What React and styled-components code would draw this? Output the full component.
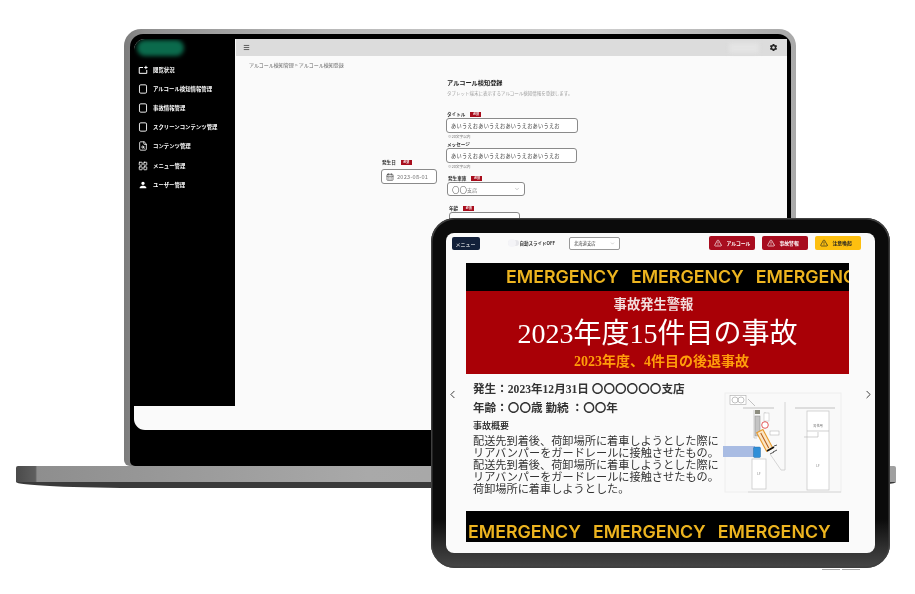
import React from "react";
import styled, { createGlobalStyle } from "styled-components";
import { FileSearch, LayoutGrid, Menu, CalendarDays, ChevronDown, ChevronLeft, ChevronRight, TriangleAlert } from "lucide-react";
import { MdSettings, MdPerson } from "react-icons/md";

const Global = createGlobalStyle`
  html, body { margin: 0; padding: 0; background: #fff; }
  body { font-family: "Noto Sans CJK JP", "Noto Sans", sans-serif; overflow: hidden; }
`;

const Canvas = styled.div`
  position: relative;
  width: 915px;
  height: 594px;
  overflow: hidden;
  background: #fff;
  filter: blur(0.45px);
`;

/* ---------- laptop ---------- */
const Laptop = styled.div`
  position: absolute;
  left: 16px;
  top: 29px;
  width: 880px;
  display: flex;
  flex-direction: column;
  align-items: flex-start;
`;
const Lid = styled.div`
  margin-left: 108px;
  width: 672px;
  height: 437px;
  box-sizing: border-box;
  padding: 5px 5px 0 6px;
  border-radius: 17px 17px 0 6px;
  background: linear-gradient(90deg, #7c7c7c 0, #8f8f8f 3%, #b9b9b9 30%, #cfcfcf 70%, #a9a9a9 100%);
`;
const Bezel = styled.div`
  height: 100%;
  box-sizing: border-box;
  padding: 5px 4px 35px 4px;
  background: #000;
  border-radius: 13px 13px 0 5px;
`;
const Screen = styled.div`
  display: flex;
  height: 391px;
  background: #fafafa;
  border-radius: 11px 0 0 11px;
  overflow: hidden;
`;
const Sidebar = styled.nav`
  width: 101px;
  height: 368px;
  flex: none;
  background: #000;
  margin-right: 1px;
  margin-top: -1px;
  box-sizing: border-box;
  padding: 2px 0 0 3px;
`;
const Logo = styled.div`
  width: 47px;
  height: 16px;
  border-radius: 9px;
  background: #0b6a4c;
  filter: blur(2px);
  margin-bottom: 4px;
`;
const NavItem = styled.div`
  display: flex;
  align-items: center;
  height: 19.2px;
  padding-left: 1px;
  color: #fff;
  font-size: 5.4px;
  font-weight: 700;
  white-space: nowrap;
  svg { flex: none; width: 10px; height: 10px; margin-right: 5px; }
`;
const Main = styled.main`
  flex: 1;
  display: flex;
  flex-direction: column;
  min-width: 0;
`;
const TopBar = styled.header`
  height: 17px;
  flex: none;
  background: #dcdcdc;
  display: flex;
  align-items: center;
  padding: 0 9px 0 7px;
  color: #333;
`;
const AccountBlur = styled.span`
  margin-left: auto;
  margin-right: 10px;
  width: 30px;
  height: 10px;
  background: #e4e4e4;
  filter: blur(2px);
`;
const Crumb = styled.div`
  padding: 5px 0 0 13px;
  height: 10px;
  line-height: 8px;
  font-size: 5px;
  color: #666;
`;
const FormRow = styled.div`
  display: flex;
  padding-left: 145px;
  gap: 9px;
`;
const DateCol = styled.div`
  width: 56px;
  margin-top: 87px;
  flex: none;
`;
const DateGap = styled.div`
  height: 3px;
`;
const FormCol = styled.div`
  width: 180px;
  padding-top: 7px;
`;
const Heading = styled.div`
  font-size: 6.2px;
  line-height: 10px;
  font-weight: 700;
  color: #222;
  padding-left: 1px;
`;
const Sub = styled.div`
  font-size: 4.5px;
  line-height: 8px;
  margin: 1px 0 13px;
  padding-left: 1px;
  color: #a0a0a0;
  white-space: nowrap;
`;
const Label = styled.div`
  display: flex;
  align-items: center;
  gap: 5px;
  height: 8px;
  font-size: 4.6px;
  font-weight: 700;
  color: #333;
  padding-left: ${p => p.$indent ?? 1}px;
  margin-top: ${p => p.$top || 0}px;
`;
const Required = styled.span`
  background: #a80d1c;
  color: #fff;
  font-size: 3px;
  line-height: 5px;
  width: 11px;
  text-align: center;
`;
const Input = styled.div`
  box-sizing: border-box;
  width: ${p => p.$w}px;
  height: ${p => p.$h || 15}px;
  margin-left: ${p => p.$indent || 0}px;
  border: 1px solid #8a8a8a;
  border-radius: 3px;
  background: #fff;
  display: flex;
  align-items: center;
  justify-content: ${p => (p.$between ? "space-between" : "flex-start")};
  gap: 3px;
  padding: 0 4px;
  font-size: 5.2px;
  letter-spacing: 0.25px;
  color: #444;
  white-space: nowrap;
`;
const DateText = styled.span`
  color: #777;
  font-size: 5.6px;
`;
const Circles = styled.span`
  font-size: 7.5px;
  letter-spacing: 0;
  color: #666;
`;
const BranchName = styled.span`
  display: flex;
  align-items: center;
  color: #777;
  font-size: 5px;
`;
const Note = styled.div`
  font-size: 3.7px;
  line-height: 7px;
  height: ${p => p.$h}px;
  padding-left: 2px;
  color: #777;
`;

/* laptop base */
const Base = styled.div`
  width: 880px;
  height: 22px;
  border-radius: 2px 2px 130px 130px / 2px 2px 6px 6px;
  background:
    linear-gradient(90deg, #4a4a4a 0, #5e5e5e 2.2%, #8e8e8e 2.4%, #a9a9a9 40%, #a0a0a0 100%) top / 100% 16px no-repeat,
    #3a3a3a;
`;

/* ---------- tablet ---------- */
const Tablet = styled.div`
  position: absolute;
  left: 431px;
  top: 218px;
  width: 459px;
  height: 350px;
  box-sizing: border-box;
  padding: 15px 15px 15px 14.5px;
  border-radius: 24px;
  background: linear-gradient(180deg, #0b0b0b 0, #0b0b0b 86%, #333 95%, #474747 100%);
  box-shadow: inset 0 0 0 1.5px #3f3f3f;
`;
const SideButtons = styled.div`
  position: absolute;
  right: 30px;
  bottom: -2px;
  display: flex;
  gap: 2px;
`;
const SideButton = styled.span`
  width: 18px;
  height: 1.5px;
  background: #aaa;
`;
const TabScreen = styled.div`
  position: relative;
  height: 320px;
  background: #fafafa;
  border-radius: 8px;
  overflow: hidden;
  box-sizing: border-box;
  padding: 3px 0 0;
`;
const ToolBar = styled.div`
  display: flex;
  align-items: center;
  height: 14px;
  padding: 0 14px 0 6px;
  margin-bottom: 12.5px;
`;
const MenuButton = styled.div`
  width: 28px;
  height: 13px;
  border-radius: 2px;
  background: #12203a;
  color: #fff;
  display: flex;
  align-items: center;
  justify-content: center;
  font-size: 5px;
  line-height: 1;
  margin-right: 28px;
`;
const Toggle = styled.span`
  position: relative;
  width: 11px;
  height: 6px;
  border-radius: 4px;
  background: #e6e6ea;
  margin-right: 1px;
  &::after {
    content: "";
    position: absolute;
    left: 0;
    top: -1px;
    width: 8px;
    height: 8px;
    border-radius: 50%;
    background: #f4f4f7;
  }
`;
const ToggleLabel = styled.span`
  width: 49.5px;
  font-size: 4.5px;
  line-height: 1;
  font-weight: 700;
  color: #333;
  white-space: nowrap;
`;
const Select = styled.div`
  box-sizing: border-box;
  width: 51px;
  height: 13px;
  border: 1px solid #999;
  border-radius: 2px;
  background: #fff;
  display: flex;
  align-items: center;
  justify-content: space-between;
  padding: 0 4px;
  font-size: 4.3px;
  line-height: 1;
  color: #444;
`;
const Alerts = styled.div`
  margin-left: auto;
  display: flex;
  gap: 6.5px;
`;
const AlertBtn = styled.div`
  box-sizing: border-box;
  width: 46.5px;
  height: 14px;
  border-radius: 2px;
  display: flex;
  align-items: center;
  padding-left: 5px;
  gap: 5px;
  font-size: 4.8px;
  line-height: 1;
  font-weight: 700;
  background: ${p => (p.$yellow ? "#fdbf0f" : "#a80d1f")};
  color: ${p => (p.$yellow ? "#222" : "#fff")};
  svg { width: 8px; height: 8px; flex: none; }
`;
const Slide = styled.div`
  margin-left: 20.5px;
  width: 383px;
`;
const Band = styled.div`
  height: ${p => p.$h}px;
  box-sizing: border-box;
  background: #000;
  overflow: hidden;
  white-space: nowrap;
  display: flex;
  align-items: center;
  padding-left: ${p => p.$left}px;
  padding-top: ${p => p.$top || 0}px;
  font: 600 17.8px/24px Inter, "Liberation Sans", sans-serif;
  color: #edb41f;
  word-spacing: 7.5px;
`;
const Red = styled.div`
  height: 83px;
  background: #a90006;
  text-align: center;
  font-family: "Liberation Serif", "Noto Sans CJK JP", serif;
  padding-top: 5px;
  box-sizing: border-box;
`;
const RedSmall = styled.div`
  color: #f2dcdc;
  font-size: 13.3px;
  line-height: 18px;
  font-weight: 700;
  padding-right: 8px;
`;
const RedBig = styled.div`
  color: #fff;
  font-size: 28px;
  line-height: 34px;
  margin-top: 3px;
`;
const RedSub = styled.div`
  color: #ff9d0a;
  font-size: 14px;
  line-height: 18px;
  margin-top: 2px;
  padding-left: 8px;
  font-weight: 700;
`;
const Detail = styled.div`
  display: flex;
  height: 137px;
  padding: 6px 0 0 7px;
  box-sizing: border-box;
`;
const DetailText = styled.div`
  width: 249px;
  flex: none;
  color: #222;
`;
const Meta = styled.div`
  font-family: "Liberation Serif", "Noto Sans CJK JP", serif;
  font-size: 11.6px;
  font-weight: 700;
  line-height: 19px;
  color: #333;
  white-space: nowrap;
`;
const Overview = styled.div`
  font-family: "Liberation Serif", "Noto Sans CJK JP", serif;
  font-size: 9px;
  font-weight: 500;
  line-height: 12px;
  margin: 2px 0 2px;
`;
const Body = styled.div`
  font-size: 11.18px;
  line-height: 12px;
  color: #333;
  white-space: nowrap;
`;
const Arrow = styled.span`
  position: absolute;
  top: 155px;
  left: ${p => p.$left}px;
  color: #222;
  display: flex;
`;
const Diagram = styled.svg`
  flex: none;
  margin-top: 10px;
`;

const Req = () => <Required>必須</Required>;

const ScreenPlusIcon = () => (
  <svg viewBox="0 0 24 24" fill="none" stroke="currentColor" strokeWidth="2.4">
    <path d="M12 6H3v14h18v-8" />
    <path d="M19 2v8M15 6h8" />
  </svg>
);
const PadIcon = () => (
  <svg viewBox="0 0 24 24" fill="none" stroke="currentColor" strokeWidth="2.2">
    <rect x="3.5" y="2" width="17" height="20" rx="3" />
  </svg>
);

const navItems = [
  [<ScreenPlusIcon key="a" />, "閲覧状況"],
  [<PadIcon key="b" />, "アルコール検知情報管理"],
  [<PadIcon key="c" />, "事故情報管理"],
  [<PadIcon key="d" />, "スクリーンコンテンツ管理"],
  [<FileSearch key="e" strokeWidth={2} />, "コンテンツ管理"],
  [<LayoutGrid key="f" strokeWidth={2} />, "メニュー管理"],
  [<MdPerson key="g" />, "ユーザー管理"],
];

const PlanDrawing = () => (
  <Diagram width="120" height="104" viewBox="12 10 120 104">
    <rect x="15" y="13" width="116" height="99" fill="#f9f9f9" stroke="#eee" />
    <rect x="20" y="15.5" width="16" height="9" fill="#fff" stroke="#aaa" strokeWidth=".6" />
    <circle cx="25" cy="20" r="3" fill="none" stroke="#999" strokeWidth=".6" />
    <circle cx="31" cy="20" r="3" fill="none" stroke="#999" strokeWidth=".6" />
    <path d="M38 19L45 26M33 28H64M85 28H125" stroke="#aaa" strokeWidth=".7" fill="none" />
    <path d="M44 30V58H47M55 32V46" stroke="#bbb" strokeWidth=".7" fill="none" />
    <rect x="45" y="30" width="5" height="4" fill="#8d8d80" />
    <rect x="45" y="36" width="5" height="20" fill="#c4c4c4" stroke="#888" strokeWidth=".5" />
    <rect x="54" y="33" width="5" height="8" fill="#fff" stroke="#bbb" strokeWidth=".5" />
    <circle cx="55" cy="45" r="3.3" fill="#fff" stroke="#d33" strokeWidth=".8" />
    <rect x="60" y="51" width="9" height="4" fill="#fff" stroke="#aaa" strokeWidth=".5" />
    <g transform="rotate(-28 55 62)">
      <rect x="52" y="50" width="7" height="21" fill="#fbe6c4" stroke="#e89a2c" strokeWidth="1.1" />
      <line x1="55.5" y1="52" x2="55.5" y2="69" stroke="#b45a1a" strokeWidth="1" />
    </g>
    <path d="M57 71L64 67" stroke="#111" strokeWidth="1.6" />
    <path d="M64 66l3-1M63 72l4-2M60 74l4-2" stroke="#555" strokeWidth="1" />
    <path d="M75 22V90M60 74L71 90L75 90" stroke="#ccc" strokeWidth=".8" fill="none" />
    <rect x="42" y="79" width="14" height="30" fill="#fff" stroke="#c4c4c4" strokeWidth=".7" />
    <rect x="97" y="31" width="22" height="79" fill="#fff" stroke="#c4c4c4" strokeWidth=".7" />
    <path d="M97 51H119M94 57H108M108 52V57" stroke="#bbb" strokeWidth=".7" fill="none" />
    <path d="M38 112H131" stroke="#ccc" strokeWidth=".7" />
    <text x="108" y="47" fontSize="3.2" textAnchor="middle" fill="#777">男性用</text>
    <text x="108" y="87" fontSize="3" textAnchor="middle" fill="#777">LF</text>
    <text x="49" y="95" fontSize="3" textAnchor="middle" fill="#777">LF</text>
    <rect x="13" y="66" width="32" height="11" fill="#a9bce3" />
    <rect x="43.5" y="67" width="7" height="10.5" rx="1.2" fill="#2f8fd8" stroke="#1c5f99" strokeWidth=".4" />
  </Diagram>
);

export default function App() {
  return (
    <Canvas>
      <Global />
      <Laptop>
        <Lid>
          <Bezel>
            <Screen>
              <Sidebar>
                <Logo />
                {navItems.map(([icon, text]) => (
                  <NavItem key={text}>{icon}{text}</NavItem>
                ))}
              </Sidebar>
              <Main>
                <TopBar>
                  <Menu size={7} strokeWidth={2.5} />
                  <AccountBlur />
                  <MdSettings size={9} color="#222" />
                </TopBar>
                <Crumb>アルコール検知管理 &gt; アルコール検知登録</Crumb>
                <FormRow>
                  <DateCol>
                    <Label>発生日<Req /></Label>
                    <DateGap />
                    <Input $w={56}>
                      <CalendarDays size={8} strokeWidth={2} />
                      <DateText>2023-08-01</DateText>
                    </Input>
                  </DateCol>
                  <FormCol>
                    <Heading>アルコール検知登録</Heading>
                    <Sub>タブレット端末に表示するアルコール検知情報を登録します。</Sub>
                    <Label>タイトル<Req /></Label>
                    <Input $w={132}>あいうえおあいうえおあいうえおあいうえお</Input>
                    <Note $h={7}>※20文字以内</Note>
                    <Label>メッセージ</Label>
                    <Input $w={131}>あいうえおあいうえおあいうえおあいうえお</Input>
                    <Note $h={11}>※20文字以内</Note>
                    <Label $indent={2}>発生車庫<Req /></Label>
                    <Input $w={78} $h={14} $indent={1} $between>
                      <BranchName><Circles>〇〇</Circles>支店</BranchName>
                      <ChevronDown size={6} color="#999" />
                    </Input>
                    <Label $top={8} $indent={3}>年齢<Req /></Label>
                    <Input $w={71} $h={14} $indent={3} />
                  </FormCol>
                </FormRow>
              </Main>
            </Screen>
          </Bezel>
        </Lid>
        <Base />
      </Laptop>

      <Tablet>
        <TabScreen>
          <ToolBar>
            <MenuButton>メニュー</MenuButton>
            <Toggle />
            <ToggleLabel>自動スライドOFF</ToggleLabel>
            <Select>
              <span>北海道支店</span>
              <ChevronDown size={5} color="#999" />
            </Select>
            <Alerts>
              <AlertBtn><TriangleAlert />アルコール</AlertBtn>
              <AlertBtn><TriangleAlert />事故警報</AlertBtn>
              <AlertBtn $yellow><TriangleAlert />注意喚起</AlertBtn>
            </Alerts>
          </ToolBar>
          <Slide>
            <Band $h={28} $left={40}>EMERGENCY EMERGENCY EMERGENCY</Band>
            <Red>
              <RedSmall>事故発生警報</RedSmall>
              <RedBig>2023年度15件目の事故</RedBig>
              <RedSub>2023年度、4件目の後退事故</RedSub>
            </Red>
            <Detail>
              <DetailText>
                <Meta>発生：2023年12月31日 〇〇〇〇〇〇支店</Meta>
                <Meta>年齢：〇〇歳 勤続 ：〇〇年</Meta>
                <Overview>事故概要</Overview>
                <Body>
                  配送先到着後、荷卸場所に着車しようとした際に<br />
                  リアバンパーをガードレールに接触させたもの。<br />
                  配送先到着後、荷卸場所に着車しようとした際に<br />
                  リアバンパーをガードレールに接触させたもの。<br />
                  荷卸場所に着車しようとした。
                </Body>
              </DetailText>
              <PlanDrawing />
            </Detail>
            <Band $h={31} $left={2} $top={11}>EMERGENCY EMERGENCY EMERGENCY</Band>
          </Slide>
          <Arrow $left={0}><ChevronLeft size={13} strokeWidth={1.6} /></Arrow>
          <Arrow $left={416}><ChevronRight size={13} strokeWidth={1.6} /></Arrow>
        </TabScreen>
        <SideButtons><SideButton /><SideButton /></SideButtons>
      </Tablet>
    </Canvas>
  );
}
